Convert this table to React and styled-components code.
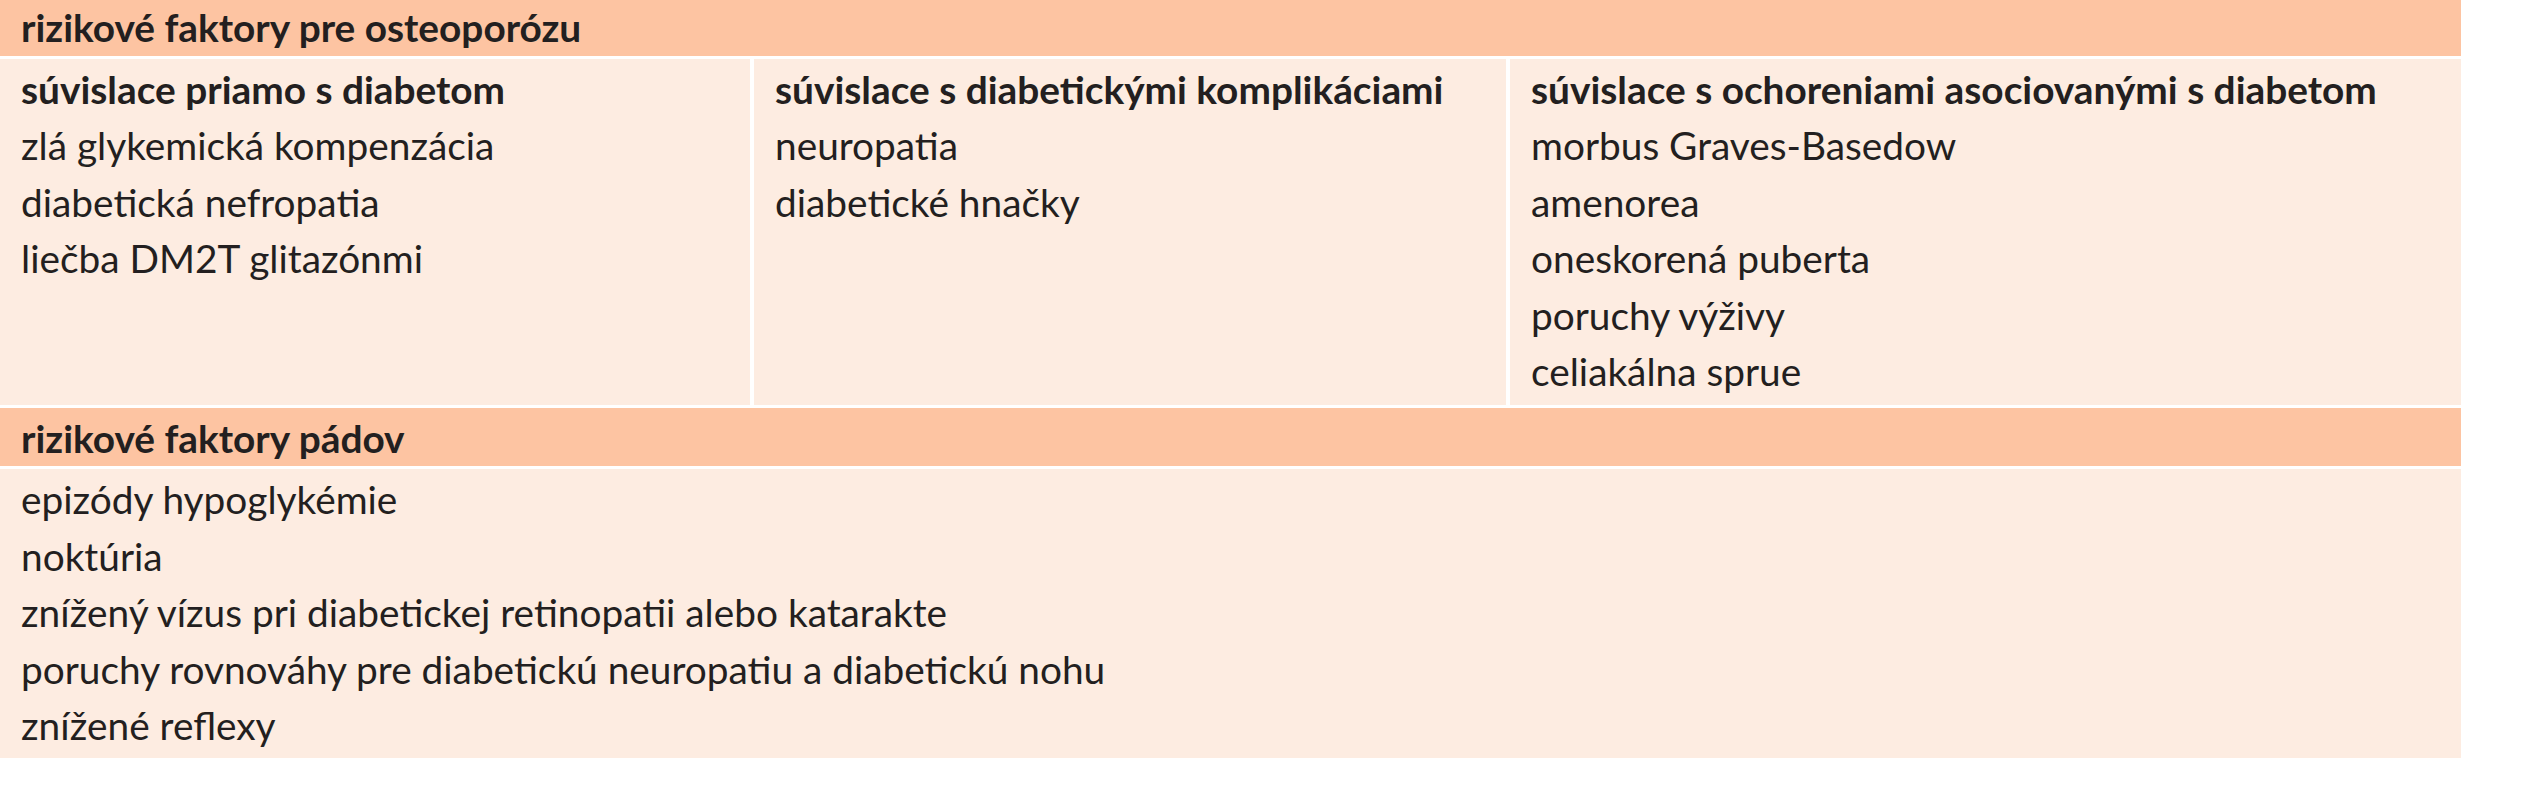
import React from 'react';
import styled, { createGlobalStyle } from 'styled-components';

const GlobalStyle = createGlobalStyle`
  body {
    margin: 0;
    background: #ffffff;
    font-family: Lato, 'Open Sans', sans-serif;
    color: #231f20;
  }
`;

const Table = styled.div`
  width: 2461px;
  margin-top: -3px;
  display: flex;
  flex-direction: column;
  gap: 3px;
  background: #ffffff;
  font-size: 38.8px;
  line-height: 56.5px;
`;

const SectionHeader = styled.div`
  background: #fdc4a2;
  padding: 2px 21px 0;
  font-weight: 700;
`;

const ColumnGrid = styled.div`
  display: grid;
  grid-template-columns: 750px 752px 1fr;
  gap: 4px;
`;

const Cell = styled.div`
  background: #fdece1;
  padding: 2px 21px ${(p) => p.$bottom || 0}px;
  display: flex;
  flex-direction: column;
`;

const ColumnTitle = styled.div`
  font-weight: 700;
`;

const Item = styled.div`
  white-space: nowrap;
`;

const osteoColumns = [
  {
    title: 'súvislace priamo s diabetom',
    items: ['zlá glykemická kompenzácia', 'diabetická nefropatia', 'liečba DM2T glitazónmi'],
  },
  {
    title: 'súvislace s diabetickými komplikáciami',
    items: ['neuropatia', 'diabetické hnačky'],
  },
  {
    title: 'súvislace s ochoreniami asociovanými s diabetom',
    items: ['morbus Graves-Basedow', 'amenorea', 'oneskorená puberta', 'poruchy výživy', 'celiakálna sprue'],
  },
];

const fallRisks = [
  'epizódy hypoglykémie',
  'noktúria',
  'znížený vízus pri diabetickej retinopatii alebo katarakte',
  'poruchy rovnováhy pre diabetickú neuropatiu a diabetickú nohu',
  'znížené reflexy',
];

export default function App() {
  return (
    <>
      <GlobalStyle />
      <Table>
        <SectionHeader>rizikové faktory pre osteoporózu</SectionHeader>
        <ColumnGrid>
          {osteoColumns.map((col) => (
            <Cell key={col.title} $bottom={5}>
              <ColumnTitle>{col.title}</ColumnTitle>
              {col.items.map((item) => (
                <Item key={item}>{item}</Item>
              ))}
            </Cell>
          ))}
        </ColumnGrid>
        <SectionHeader>rizikové faktory pádov</SectionHeader>
        <Cell $bottom={4}>
          {fallRisks.map((item) => (
            <Item key={item}>{item}</Item>
          ))}
        </Cell>
      </Table>
    </>
  );
}
